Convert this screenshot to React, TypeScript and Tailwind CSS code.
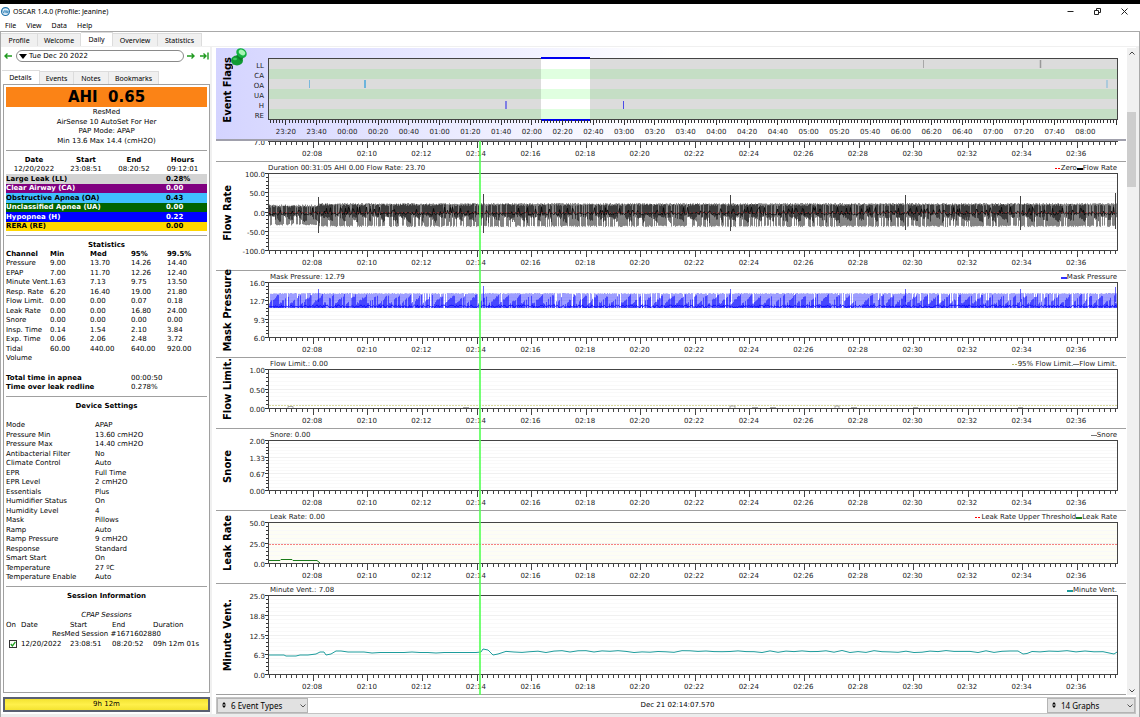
import { ReactNode } from "react";

const rand = (seed: number) => {
  let s = seed;
  return () => {
    s = (s * 16807) % 2147483647;
    return s / 2147483647;
  };
};

// plot area is 850 units wide, one unit per pixel at the default window size
const W = 850;
const spikes = [50, 215, 462, 637, 752, 847];

const info = [
  ["Large Leak (LL)", "0.28%", "bg-[#d3d3d3] text-black"],
  ["Clear Airway (CA)", "0.00", "bg-[#800080] text-white"],
  ["Obstructive Apnea (OA)", "0.43", "bg-[#40bfff] text-black"],
  ["Unclassified Apnea (UA)", "0.00", "bg-[#006400] text-white"],
  ["Hypopnea (H)", "0.22", "bg-[#0000ff] text-white"],
  ["RERA (RE)", "0.00", "bg-[#ffd700] text-black"],
];

const stats = [
  ["Pressure", "9.00", "13.70", "14.26", "14.40"],
  ["EPAP", "7.00", "11.70", "12.26", "12.40"],
  ["Minute Vent.", "1.63", "7.13", "9.75", "13.50"],
  ["Resp. Rate", "6.20", "16.40", "19.00", "21.80"],
  ["Flow Limit.", "0.00", "0.00", "0.07", "0.18"],
  ["Leak Rate", "0.00", "0.00", "16.80", "24.00"],
  ["Snore", "0.00", "0.00", "0.00", "0.00"],
  ["Insp. Time", "0.14", "1.54", "2.10", "3.84"],
  ["Exp. Time", "0.06", "2.06", "2.48", "3.72"],
  ["Tidal\nVolume", "60.00", "440.00", "640.00", "920.00"],
];

const settings = [
  ["Mode", "APAP"],
  ["Pressure Min", "13.60 cmH2O"],
  ["Pressure Max", "14.40 cmH2O"],
  ["Antibacterial Filter", "No"],
  ["Climate Control", "Auto"],
  ["EPR", "Full Time"],
  ["EPR Level", "2 cmH2O"],
  ["Essentials", "Plus"],
  ["Humidifier Status", "On"],
  ["Humidity Level", "4"],
  ["Mask", "Pillows"],
  ["Ramp", "Auto"],
  ["Ramp Pressure", "9 cmH2O"],
  ["Response", "Standard"],
  ["Smart Start", "On"],
  ["Temperature", "27 ºC"],
  ["Temperature Enable", "Auto"],
];

const Rule = () => (
  <div className="flex h-[9px] items-center">
    <hr className="w-full border-t border-[#a0a0a0]" />
  </div>
);

const Arrow = ({ label, d, wide }: { label: string; d: string; wide?: boolean }) => (
  <button aria-label={label} className={wide ? "w-[9px]" : "w-[8px]"}>
    <svg viewBox={wide ? "0 0 9 8" : "0 0 8 8"} className="h-[8px] w-full" fill="none" stroke="#1f9a1f" strokeWidth="1.4">
      <path d={d} />
    </svg>
  </button>
);

const TitleBar = () => (
  <header className="flex h-[15px] items-center justify-between pl-[1px] pr-[12px] font-['Noto_Sans',sans-serif]">
    <div className="flex items-center gap-[3px]">
      <svg viewBox="0 0 16 16" className="h-[9px] w-[9px]">
        <circle cx="8" cy="8" r="7" fill="#e4f1fa" stroke="#1c6fa8" strokeWidth="2" />
        <path d="M3 6l2 5 1.500-5h1l1.500 5 1.500-5 1.500 5 1-4" fill="none" stroke="#2a7fb8" strokeWidth="1.3" />
      </svg>
      <span>OSCAR 1.4.0 (Profile: Jeanine)</span>
    </div>
    <div className="flex items-center gap-[20px]">
      <button aria-label="Minimize">
        <svg viewBox="0 0 7 7" className="h-[7px] w-[7px]" stroke="#222">
          <path d="M0.5 3.5h6" />
        </svg>
      </button>
      <button aria-label="Restore">
        <svg viewBox="0 0 7 7" className="h-[7px] w-[7px]" fill="none" stroke="#222">
          <path d="M0.5 2.5h4v4h-4zM2.5 2V0.5h4v4H5" />
        </svg>
      </button>
      <button aria-label="Close">
        <svg viewBox="0 0 7 7" className="h-[7px] w-[7px]" stroke="#222">
          <path d="M0.5 0.5l6 6M6.5 0.5l-6 6" />
        </svg>
      </button>
    </div>
  </header>
);

const Tab = ({ children, width, active }: { children: ReactNode; width: string; active?: boolean }) => (
  <button
    role="tab"
    aria-selected={!!active}
    className={`${width} border-t border-r border-[#dcdcdc] text-center ${active ? "h-[14px] bg-white" : "h-[13px] bg-[#f0f0f0]"}`}
  >
    {children}
  </button>
);

const Details = () => (
  <div className="h-[609px] border border-[#a0a0a0] px-[2px] pt-[2px] leading-[9px]">
    <h1 className="bg-[#fb8316] text-center text-[15px] leading-[20px] font-bold whitespace-pre">AHI  0.65</h1>
    <div className="pt-[1px] text-center leading-[9px]">
      <p>ResMed</p>
      <p className="mt-[1px]">AirSense 10 AutoSet For Her</p>
      <p>PAP Mode: APAP</p>
      <p className="mt-[1px]">Min 13.6 Max 14.4 (cmH2O)</p>
    </div>
    <Rule />
    <table className="w-full table-fixed text-center">
      <thead>
        <tr>
          <th className="w-[56px] p-0 leading-[10px]">Date</th>
          <th className="w-[48px] p-0">Start</th>
          <th className="w-[48px] p-0">End</th>
          <th className="p-0">Hours</th>
        </tr>
      </thead>
      <tbody>
        <tr>
          <td className="p-0">12/20/2022</td>
          <td className="p-0">23:08:51</td>
          <td className="p-0">08:20:52</td>
          <td className="p-0">09:12:01</td>
        </tr>
      </tbody>
    </table>
    <table className="w-full font-bold">
      <tbody>
        {info.map(([name, value, color]) => (
          <tr key={name} className={`odd:h-[10px] even:h-[9px] ${color}`}>
            <td className="p-0">{name}</td>
            <td className="w-[41px] p-0">{value}</td>
          </tr>
        ))}
      </tbody>
    </table>
    <Rule />
    <h2 className="text-center leading-[10px] font-bold">Statistics</h2>
    <table className="w-full table-fixed text-left">
      <thead>
        <tr>
          <th className="w-[44px] p-0">Channel</th>
          <th className="w-[40px] p-0">Min</th>
          <th className="w-[41px] p-0">Med</th>
          <th className="w-[36px] p-0">95%</th>
          <th className="p-0">99.5%</th>
        </tr>
      </thead>
      <tbody>
        {stats.map((row) => (
          <tr key={row[0]} className="align-top whitespace-pre odd:h-[10px] even:h-[9px]">
            {row.map((cell, i) => (
              <td key={i} className="p-0">{cell}</td>
            ))}
          </tr>
        ))}
      </tbody>
    </table>
    <table className="mt-[10px] w-full">
      <tbody>
        <tr className="h-[10px]">
          <th className="p-0 text-left">Total time in apnea</th>
          <td className="w-[76px] p-0">00:00:50</td>
        </tr>
        <tr>
          <th className="p-0 text-left">Time over leak redline</th>
          <td className="p-0">0.278%</td>
        </tr>
      </tbody>
    </table>
    <Rule />
    <h2 className="pt-[1px] text-center font-bold">Device Settings</h2>
    <table className="mt-[10px] w-full">
      <tbody>
        {settings.map(([name, value]) => (
          <tr key={name} className="odd:h-[9px] even:h-[10px]">
            <td className="w-[89px] p-0">{name}</td>
            <td className="p-0">{value}</td>
          </tr>
        ))}
      </tbody>
    </table>
    <Rule />
    <h2 className="pt-[1px] text-center font-bold">Session Information</h2>
    <p className="mt-[10px] text-center italic">CPAP Sessions</p>
    <table className="w-full table-fixed text-left">
      <thead>
        <tr className="h-[10px]">
          <th className="w-[15px] p-0 font-normal">On</th>
          <th className="w-[49px] p-0 font-normal">Date</th>
          <th className="w-[42px] p-0 font-normal">Start</th>
          <th className="w-[41px] p-0 font-normal">End</th>
          <th className="p-0 font-normal">Duration</th>
        </tr>
      </thead>
      <tbody>
        <tr>
          <td colSpan={5} className="p-0 text-center">ResMed Session #1671602880</td>
        </tr>
        <tr className="h-[10px]">
          <td className="p-0">
            <label className="relative block h-[8px] w-[11px] pl-[3px]">
              <input type="checkbox" defaultChecked aria-label="Session on" className="block h-[8px] w-[8px] appearance-none border border-[#333] bg-white" />
              <svg viewBox="0 0 8 8" className="absolute top-0 left-[3px] h-[8px] w-[8px]" fill="none" stroke="#21a121" strokeWidth="1.3">
                <path d="M1.8 4l1.6 2L6.4 1.8" />
              </svg>
            </label>
          </td>
          <td className="p-0">12/20/2022</td>
          <td className="p-0">23:08:51</td>
          <td className="p-0">08:20:52</td>
          <td className="p-0">09h 12m 01s</td>
        </tr>
      </tbody>
    </table>
  </div>
);

const Sidebar = () => (
  <aside className="flex w-[211px] shrink-0 flex-col border-r-2 border-[#f0f0f0] pl-[1px]">
    <div className="flex h-[18px] items-center pl-[2px]">
      <Arrow label="Previous day" d="M8 4H1M3.5 1.5L1 4l2.500 2.500" />
      <button className="mr-[3px] ml-[4px] flex h-[12px] w-[168px] items-center gap-[2px] rounded-full border border-[#8a8a8a] pl-[2px]">
        <svg viewBox="0 0 8 5" className="h-[5px] w-[8px]">
          <path d="M0 0h8L4 5z" />
        </svg>
        Tue Dec 20 2022
      </button>
      <Arrow label="Next day" d="M0 4h7M4.500 1.500L7 4l-2.500 2.500" />
      <span className="w-[5px]" />
      <Arrow label="Latest day" wide d="M0 4h6M3.500 1.500L6 4l-2.500 2.500M8 0.500v7" />
    </div>
    <div role="tablist" className="mt-[5px] flex h-[14px] items-end font-['Noto_Sans',sans-serif]">
      <Tab width="w-[38px]" active>Details</Tab>
      <Tab width="w-[34px]">Events</Tab>
      <Tab width="w-[35px]">Notes</Tab>
      <Tab width="w-[50px]">Bookmarks</Tab>
    </div>
    <div className="pl-[1px]">
      <Details />
      <button className="mt-[4px] block h-[15px] w-full border-2 border-[#5a6072] bg-linear-to-b from-[#f3e330] via-[#fff04a] to-[#f3e330] text-center leading-[11px]">
        9h 12m
      </button>
    </div>
  </aside>
);

const flowTicks = Array.from({ length: 156 }, (_, i) => i);
const eventTicks = Array.from({ length: 276 }, (_, i) => i);
const pad = (n: number) => String(n).padStart(2, "0");

const TimeAxis = () => (
  <svg className="block h-[19px] w-full overflow-visible" shapeRendering="crispEdges">
    {flowTicks.map((i) => {
      const x = 0.2 + i * 0.642;
      const major = i % 10 === 8;
      return <line key={i} x1={`${x}%`} x2={`${x}%`} y1="0" y2={major ? 6 : 3} stroke="#444" />;
    })}
    {Array.from({ length: 15 }, (_, i) => (
      <text key={i} x={`${5.2 + i * 6.42}%`} y="14" textAnchor="middle">{`02:${pad(8 + i * 2)}`}</text>
    ))}
  </svg>
);

const EventAxis = () => (
  <svg className="block h-[19px] w-full overflow-visible" shapeRendering="crispEdges">
    {eventTicks.map((i) => {
      const x = 0.3 + i * 0.3618;
      const major = i % 10 === 5;
      return <line key={i} x1={`${x}%`} x2={`${x}%`} y1="0" y2={major ? 5 : 3} stroke="#333" />;
    })}
    {Array.from({ length: 27 }, (_, i) => {
      const m = 23 * 60 + 20 + i * 20;
      return (
        <text key={i} x={`${2.1 + i * 3.618}%`} y="14" textAnchor="middle">{`${pad(Math.floor(m / 60) % 24)}:${pad(m % 60)}`}</text>
      );
    })}
  </svg>
);

const PaneTitle = ({ children }: { children: ReactNode }) => (
  <div className="flex w-[24px] shrink-0 items-center justify-center pt-[1px]">
    <h3 className="rotate-180 text-[10px] leading-[12px] font-bold whitespace-nowrap text-black [writing-mode:vertical-rl]">{children}</h3>
  </div>
);

interface PaneProps {
  title: string;
  caption: string;
  legend: ReactNode;
  labels: string[];
  height: number;
  plot: string;
  captionPad?: string;
  children?: ReactNode;
}

const Pane = ({ title, caption, legend, labels, height, plot, captionPad = "pl-[54px]", children }: PaneProps) => {
  const n = (labels.length - 1) * 5;
  const inner = height - 1;
  return (
    <section className="border-b border-[#a0a0a0]">
      <div className={`flex h-[11px] items-center justify-between pt-[2px] pr-[9px] ${captionPad}`}>
        <span>{caption}</span>
        <span className="flex items-center">{legend}</span>
      </div>
      <div className={`flex pr-[8px] ${plot}`}>
        <PaneTitle>{title}</PaneTitle>
        <svg className="h-full w-[28px] shrink-0 overflow-visible" shapeRendering="crispEdges">
          {Array.from({ length: n + 1 }, (_, i) => {
            const y = 0.5 + (i * inner) / n;
            return <line key={i} x1={i % 5 ? 26 : 25} x2="28" y1={y} y2={y} stroke="#333" />;
          })}
          {labels.map((l, i) => (
            <text key={l} x="25" y={4 + Math.round((i * inner) / (labels.length - 1))} textAnchor="end">{l}</text>
          ))}
        </svg>
        <svg viewBox={`0 0 ${W} ${height}`} preserveAspectRatio="none" className="h-full min-w-0 flex-1">
          {plot.includes("bg-") && <rect width={W} height={height} fill="#fdfdf4" />}
          {Array.from({ length: n - 1 }, (_, i) => (
            <path key={i} d={`M1 ${Math.round(((i + 1) * inner) / n) + 0.5}H${W}`} stroke={(i + 1) % 5 ? "#f9f9f9" : "#f0f0f0"} />
          ))}
          {children}
          <rect x="0.5" y="0.5" width={W - 1} height={height - 1} fill="none" stroke="#444" />
        </svg>
      </div>
      <div className="pr-[8px] pl-[52px]">
        <TimeAxis />
      </div>
    </section>
  );
};

const Key = ({ color, dashed, thin, children }: { color: string; dashed?: boolean; thin?: boolean; children: ReactNode }) => (
  <>
    <svg viewBox="0 0 6 2" className="h-[2px] w-[6px]">
      <path d={thin || dashed ? "M0 0.500h6" : "M0 1h6"} stroke={color} strokeWidth={thin || dashed ? 1 : 2} strokeDasharray={dashed ? "2 1" : undefined} />
    </svg>
    {children}
  </>
);

// breathing flow: grey strokes for full breaths, dark ones for the dense middle
const FlowTrace = () => {
  const r = rand(77);
  let light = "";
  let dark = "";
  let core = "M1 40";
  for (let x = 1; x < W - 1; x++) {
    const start = x < 50 ? 1.5 : 0;
    const top = 30 + start + r() * 1.6;
    const bottom = 52.5 - start + r() * 1.5;
    light += `M${x + 0.5} ${top.toFixed(1)}V${(r() > 0.25 ? bottom : bottom - 9).toFixed(1)}`;
    // the exhale side fills in a saw-tooth that repeats every dozen pixels
    if (r() > 0.25) dark += `M${x + 0.5} ${(31 + start + r() * 2).toFixed(1)}V${(40 + ((x % 13) / 13) * 8 + r() * 3).toFixed(1)}`;
    core += `L${x + 0.5} ${(r() > 0.8 ? 34 + r() * 5 : 39.5 + r() * 2.5).toFixed(1)}`;
  }
  const peaks = [[24, 60], [21, 60], [22, 58], [22, 57], [23, 57], [20, 56]];
  return (
    <g fill="none">
      <path d={light} stroke="#000" strokeOpacity="0.48" />
      <path d={dark} stroke="#000" strokeOpacity="0.55" />
      <path d={core} stroke="#000" strokeOpacity="0.8" />
      <path d={spikes.map((x, i) => `M${x + 0.5} ${peaks[i][0]}V${peaks[i][1]}`).join("")} stroke="#444" />
      <path d={`M1 39.500H${W}`} stroke="#d33" strokeOpacity="0.45" strokeDasharray="2 2" />
    </g>
  );
};

const MaskTrace = () => {
  const r = rand(4242);
  let light = "";
  let mid = "";
  let base = "M1 24";
  for (let x = 1; x < W - 1; x++) {
    if (r() > 0.08) light += `M${x + 0.5} ${(11 + r()).toFixed(1)}V26`;
    // ramps of a few pixels give the saw-tooth look
    if (r() > 0.2) mid += `M${x + 0.5} ${(23 - ((x % 11) / 11) * 10 - r() * 2).toFixed(1)}V26`;
    base += `L${x + 0.5} ${(23 + r() * 2.5).toFixed(1)}`;
  }
  return (
    <g fill="none" stroke="#00f">
      <path d={light} strokeOpacity="0.38" />
      <path d={mid} strokeOpacity="0.55" />
      <path d={base} strokeOpacity="0.9" />
      <path d={spikes.map((x, i) => `M${x + 0.5} ${[7, 4, 7, 7, 7, 5][i]}V20`).join("")} strokeOpacity="0.6" />
    </g>
  );
};

const MinuteTrace = () => {
  const r = rand(99);
  let d = "M1 60H16L18 61H28L32 60L40 60L48 59L52 57H56L58 60L63 59L68 56H73L80 57";
  for (let x = 88; x < 212; x += 8) d += `L${x} ${57 + Math.round(r() * 2) / 2}`;
  d += "L213 57L215 54L220 55L225 60L230 59";
  for (let x = 238; x < 745; x += 8) d += `L${x} ${(55.5 + r() * 2).toFixed(1)}`;
  d += "L750 56L755 59L759 58.500L764 56.500";
  for (let x = 772; x < 838; x += 9) d += `L${x} ${(55.5 + r() * 1.5).toFixed(1)}`;
  return <path d={`${d}L846 59L849 57`} fill="none" stroke="#1d9c9c" />;
};

const EventFlags = () => (
  <section className="relative z-10 border-b-2 border-[#a0a0ac] bg-white bg-linear-to-r from-[#d4d4ff] to-white to-50% pt-[10px]">
    <div className="flex h-[62px] pr-[8px]">
      <PaneTitle>Event Flags</PaneTitle>
      <div className="flex w-[28px] shrink-0 flex-col pt-[3px] pr-[4px] text-right leading-[10px]">
        {["LL", "CA", "OA", "UA", "H", "RE"].map((l) => (
          <span key={l}>{l}</span>
        ))}
      </div>
      <svg viewBox={`0 0 ${W} 62`} preserveAspectRatio="none" className="h-full min-w-0 flex-1 overflow-visible">
        {[0, 1, 2, 3, 4, 5].map((i) => (
          <rect key={i} y={1 + i * 10} width={W} height="10" fill={i % 2 ? "#c5dec5" : "#dcdcdc"} />
        ))}
        <rect x="273" y="0" width="49" height="61" fill="#fff" />
        <path d="M273 16h49M273 36h49M273 56h49" stroke="#e0ffe0" strokeWidth="10" />
        <path d="M655.500 2v8" stroke="#a8a8a8" />
        <path d="M772.500 2v8" stroke="#999" strokeWidth="1.500" />
        <path d="M41.500 22v8M839 22v8" stroke="#7ab8dc" />
        <path d="M97 22v8" stroke="#6cb4dc" strokeWidth="2" />
        <path d="M238 43v8" stroke="#4c4ce8" strokeWidth="1.300" />
        <path d="M355.500 43v8" stroke="#4c4ce8" />
        <rect x="0.500" y="0.500" width={W - 1} height="61" fill="none" stroke="#444" />
        <path d="M273 0h49M273 62h49" stroke="#0000f0" strokeWidth="2" />
      </svg>
    </div>
    <div className="pr-[8px] pl-[52px]">
      <EventAxis />
    </div>
    <svg viewBox="0 0 16 19" className="absolute top-0 left-[15px] h-[19px] w-[16px]">
      <path d="M5 13L1 18" stroke="#7a8a7a" />
      <ellipse cx="6" cy="12.500" rx="6" ry="5" fill="#0f9a32" />
      <path d="M5 8l4-3 4 4-3 4z" fill="#0c7d28" />
      <ellipse cx="10.500" cy="5" rx="5.500" ry="4.500" transform="rotate(35 10.500 5)" fill="#10b040" />
      <ellipse cx="11" cy="4.500" rx="3.500" ry="2.500" transform="rotate(35 11 4.500)" fill="#a4f5b4" />
      <ellipse cx="4" cy="11" rx="2" ry="1.300" fill="#3fc860" />
    </svg>
  </section>
);

const Combo = ({ label, value, width }: { label: string; value: string; width: string }) => (
  <div className={`relative h-[15px] ${width}`}>
    <select aria-label={label} className="block h-full w-full appearance-none border border-[#b4b4b4] bg-[#e1e1e1] pl-[13px] font-['Noto_Sans',sans-serif] text-[8px] leading-[13px]">
      <option>{value}</option>
    </select>
    <svg viewBox="0 0 4 6" className="absolute top-[4px] left-[5px] h-[6px] w-[4px]">
      <path d="M0 2.500L2 0l2 2.500zM0 3.500L2 6l2-2.500z" />
    </svg>
    <svg viewBox="0 0 6 4" className="absolute top-[6px] right-[2px] h-[4px] w-[6px]" fill="none" stroke="#555">
      <path d="M0.500 0.500L3 3l2.500-2.500" />
    </svg>
  </div>
);

const Graphs = () => (
  <div className="flex">
    <div className="min-w-0 flex-1 fill-[#222] text-[#222]">
      <EventFlags />
      <div className="relative">
        <section className="border-b border-[#a0a0a0]">
          <div className="pr-[8px] pl-[52px]">
            <div className="border-t border-[#444]" />
          </div>
          <div className="flex pr-[8px]">
            <div className="h-[5px] w-[52px] shrink-0 pr-[3px] text-right">
              <p className="-mt-[3px] leading-[8px]">7.0</p>
            </div>
            <div className="min-w-0 flex-1">
              <TimeAxis />
            </div>
          </div>
        </section>
        <Pane
          title="Flow Rate"
          caption="Duration 00:31:05 AHI 0.00 Flow Rate: 23.70"
          captionPad="pl-[52px]"
          legend={<><Key color="#f00" dashed>Zero</Key><Key color="#000">Flow Rate</Key></>}
          labels={["100.0", "50.0", "0.0", "-50.0", "-100.0"]}
          height={78}
          plot="h-[78px]"
        >
          <FlowTrace />
        </Pane>
        <Pane
          title="Mask Pressure"
          caption="Mask Pressure: 12.79"
          legend={<Key color="#3030ff">Mask Pressure</Key>}
          labels={["16.0", "12.7", "9.3", "6.0"]}
          height={56}
          plot="h-[56px]"
        >
          <MaskTrace />
        </Pane>
        <Pane
          title="Flow Limit."
          caption="Flow Limit.: 0.00"
          legend={<><Key color="#b5b560" dashed>95% Flow Limit.</Key><Key color="#777" thin>Flow Limit.</Key></>}
          labels={["1.00", "0.50", "0.00"]}
          height={40}
          plot="h-[40px]"
        >
          <path d={`M1 36.500H${W}`} stroke="#d8d89c" strokeDasharray="2 1" />
          <path d="M20 39v-1.500h5V39M462 39v-2h5v2M195 38.500h6M484 38.500h6M502 38.500h6M567 39v-2h4v2M583 38.500h6M645 38.500h5M750 38.500h5" fill="none" stroke="#888" strokeWidth="0.700" />
        </Pane>
        <Pane
          title="Snore"
          caption="Snore: 0.00"
          legend={<Key color="#777" thin>Snore</Key>}
          labels={["2.00", "1.33", "0.67", "0.00"]}
          height={51}
          plot="h-[51px]"
        />
        <Pane
          title="Leak Rate"
          caption="Leak Rate: 0.00"
          legend={<><Key color="#f00" dashed>Leak Rate Upper Threshold</Key><Key color="#1a7a1a">Leak Rate</Key></>}
          labels={["50.0", "25.0", "0.0"]}
          height={42}
          plot="h-[42px] bg-white"
        >
          <path d={`M1 22.500H${W}`} stroke="#f58080" strokeDasharray="2 1" />
          <path d="M1 38.500H12L13 37.500H24L25 38.500H49L52 41" fill="none" stroke="#1a7a1a" />
        </Pane>
        <Pane
          title="Minute Vent."
          caption="Minute Vent.: 7.08"
          legend={<Key color="#1d9c9c">Minute Vent.</Key>}
          labels={["25.0", "18.8", "12.5", "6.3", "0.0"]}
          height={80}
          plot="h-[80px]"
        >
          <MinuteTrace />
        </Pane>
        {/* time cursor */}
        <div className="pointer-events-none absolute inset-0 pr-[8px] pl-[52px]">
          <svg className="h-full w-full">
            <line x1="24.940%" x2="24.940%" y1="0" y2="100%" stroke="#50ff50" strokeOpacity="0.800" strokeWidth="2" />
          </svg>
        </div>
      </div>
    </div>
    <div className="flex w-[10px] shrink-0 flex-col justify-between border-l border-white bg-[#f0f0f0]">
      <div>
        <button aria-label="Scroll up" className="flex h-[9px] w-full items-center justify-center">
          <svg viewBox="0 0 6 4" className="h-[4px] w-[6px]" fill="none" stroke="#444">
            <path d="M0.500 3.500L3 1l2.500 2.500" />
          </svg>
        </button>
        <div className="mt-[55px] h-[75px] bg-[#cdcdcd]" />
      </div>
      <button aria-label="Scroll down" className="flex h-[9px] w-full items-center justify-center">
        <svg viewBox="0 0 6 4" className="h-[4px] w-[6px]" fill="none" stroke="#444">
          <path d="M0.500 0.500L3 3l2.500-2.500" />
        </svg>
      </button>
    </div>
  </div>
);

const App = () => {
  return (
    <div className="min-h-screen overflow-hidden border-t-[4px] border-black bg-white font-['DejaVu_Sans',sans-serif] text-[7px] leading-[9px] text-black">
      <TitleBar />
      <nav className="flex h-[12px] items-center gap-[10px] pl-[5px] font-['Noto_Sans',sans-serif]">
        <button>File</button>
        <button>View</button>
        <button>Data</button>
        <button>Help</button>
      </nav>
      <div className="border-x border-t border-[#a9a9a9] pt-[1px]">
        <div role="tablist" className="flex h-[14px] items-end border-b border-[#f0f0f0] font-['Noto_Sans',sans-serif]">
          <Tab width="w-[37px]">Profile</Tab>
          <Tab width="w-[43px]">Welcome</Tab>
          <Tab width="w-[32px]" active>Daily</Tab>
          <Tab width="w-[45px]">Overview</Tab>
          <Tab width="w-[44px]">Statistics</Tab>
        </div>
        <div className="flex">
          <Sidebar />
          <main className="min-w-0 flex-1 border-r-3 border-[#f0f0f0] pt-[1px] pl-[4px]">
            <Graphs />
            <div className="mt-[2px] flex h-[17px] items-center justify-between border border-[#c4c4c4]">
              <Combo label="Event types" value="6 Event Types" width="w-[91px]" />
              <span>Dec 21 02:14:07.570</span>
              <Combo label="Graphs" value="14 Graphs" width="w-[88px]" />
            </div>
          </main>
        </div>
        <div className="h-[4px] bg-[#ececec]" />
      </div>
    </div>
  );
};

export default App;
